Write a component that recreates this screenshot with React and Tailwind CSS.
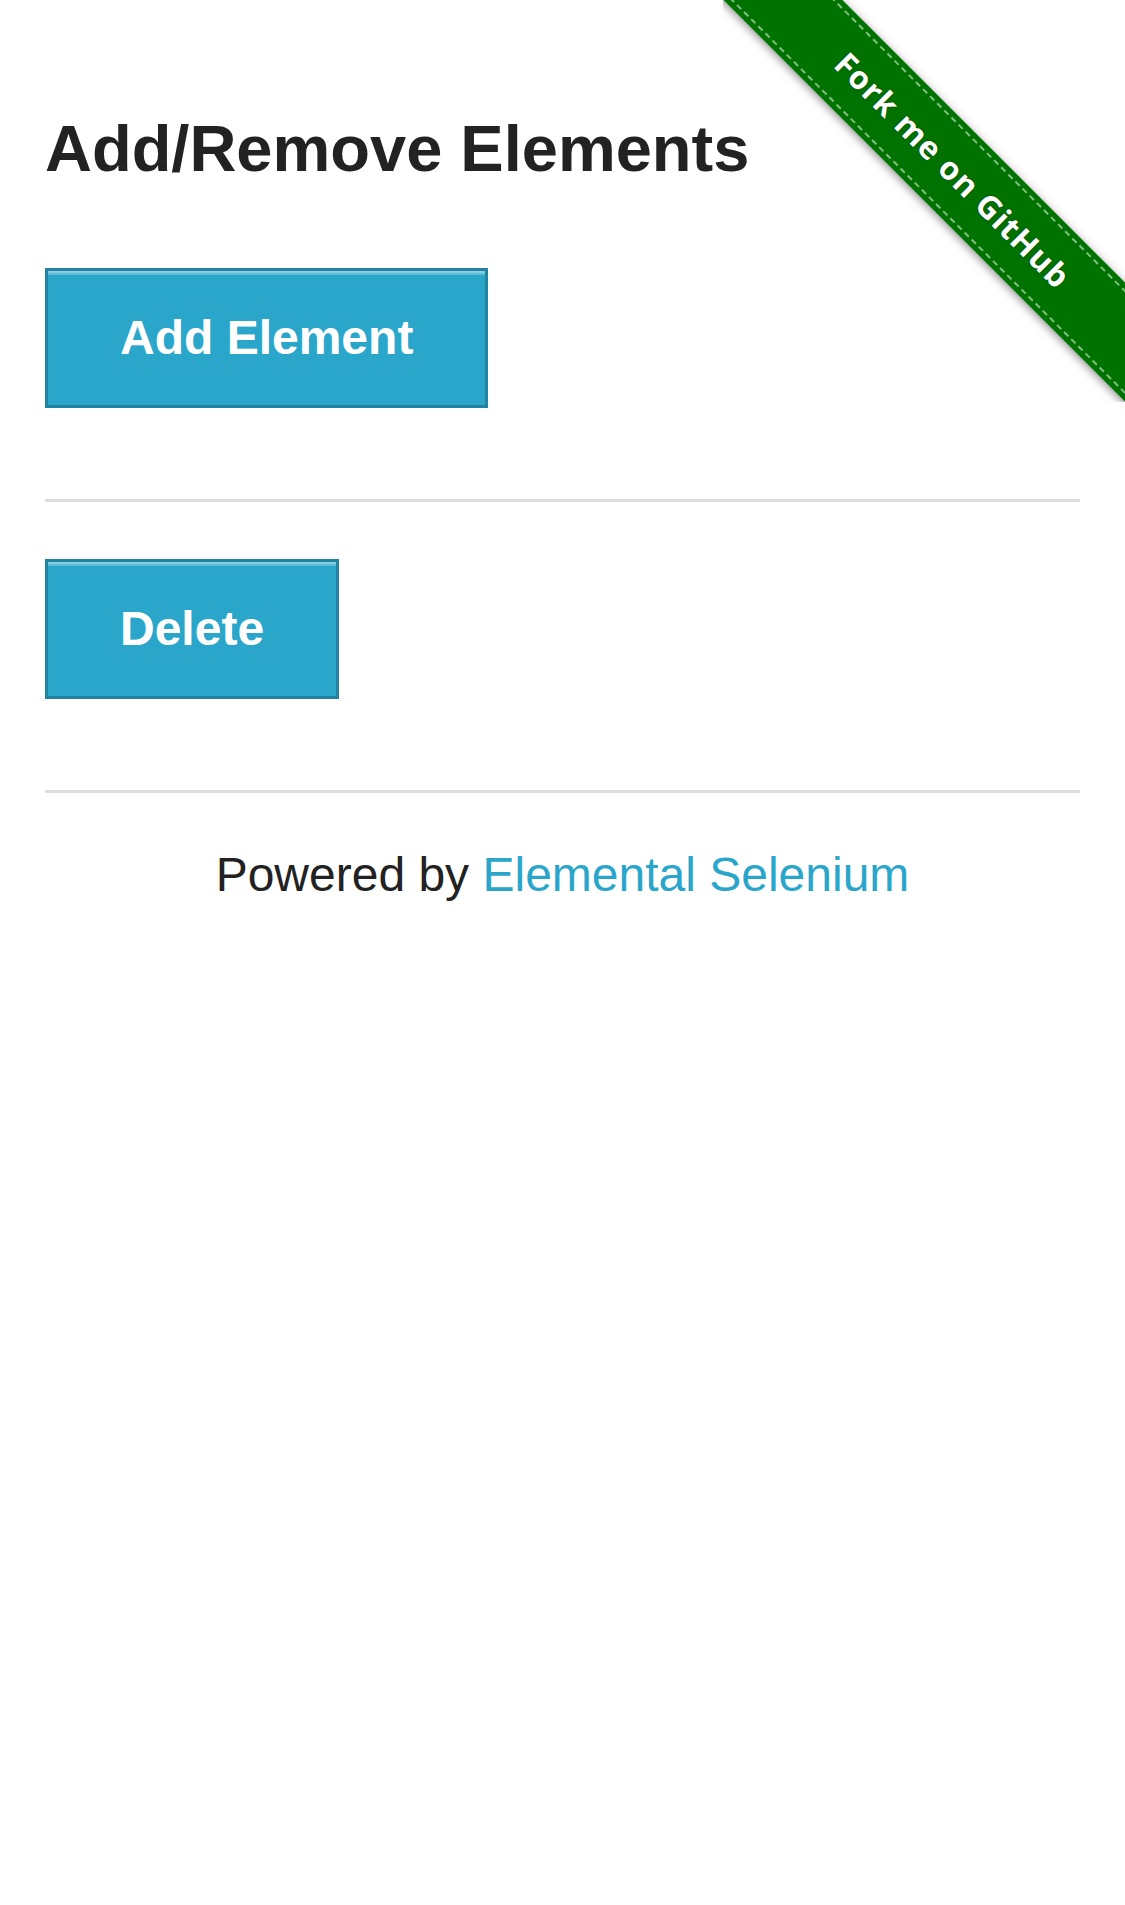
import React, { useState } from 'react';

const ForkRibbon = () => (
  <div className="absolute top-0 right-0 w-[402px] h-[402px] overflow-hidden pointer-events-none">
    <div className="absolute left-[-120px] top-[128px] w-[700px] h-[84px] rotate-45 bg-[#007200] py-[5px] shadow-[0_2px_10px_rgba(0,0,0,0.45)]">
      <div className="h-full border-y-2 border-dashed border-[#7fbf7f] flex items-center justify-center">
        <span className="font-['Open_Sans',sans-serif] font-bold text-[32px] leading-none tracking-[1px] text-white [text-shadow:0_0_2px_rgba(0,0,0,0.5)]">
          Fork me on GitHub
        </span>
      </div>
    </div>
  </div>
);

const Button = ({ children, onClick }) => (
  <button
    onClick={onClick}
    className="bg-[#2ba6cb] border-[3px] border-[#2284a1] text-white font-bold text-[48px] leading-[56px] py-[39px] px-[72px] shadow-[inset_0_2px_0_rgba(255,255,255,0.25),inset_0_4px_0_rgba(255,255,255,0.25)] cursor-pointer"
  >
    {children}
  </button>
);

const App = () => {
  const [count, setCount] = useState(1);

  return (
    <div className="relative min-h-screen bg-white overflow-hidden font-['Liberation_Sans',Arial,sans-serif] text-[#222222]">
      <ForkRibbon />

      <div className="px-[45px] pt-[109px]">
        <h3 className="text-[65px] leading-[80px] font-bold">Add/Remove Elements</h3>

        <div className="mt-[79px]">
          <Button onClick={() => setCount(count + 1)}>Add Element</Button>
        </div>

        <div className="mt-[91px] h-[3px] bg-[#dddddd]" />

        <div className="mt-[57px] flex flex-wrap gap-[20px]">
          {Array.from({ length: count }).map((_, i) => (
            <Button key={i} onClick={() => setCount(count - 1)}>Delete</Button>
          ))}
        </div>

        <div className="mt-[91px] h-[3px] bg-[#dddddd]" />

        <p className="mt-[54px] text-center text-[48px] leading-[56px]">
          Powered by <a href="#" className="text-[#2ba6cb]">Elemental Selenium</a>
        </p>
      </div>
    </div>
  );
};

export default App;
